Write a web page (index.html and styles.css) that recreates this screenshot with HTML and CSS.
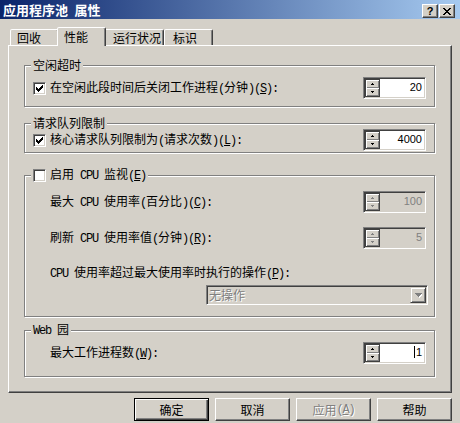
FILE: index.html
```html
<!DOCTYPE html>
<html lang="zh-CN">
<head>
<meta charset="utf-8">
<title>应用程序池 属性</title>
<link rel="stylesheet" href="styles.css">
</head>
<body>
<div class="win">
  <div class="titlebar">
    <span class="title">应用程序池&ensp;属性</span>
    <div class="tbtns">
      <span class="tbtn">?</span>
      <span class="tbtn"><svg width="8" height="7" viewBox="0 0 8 7" shape-rendering="crispEdges"><path d="M0 0h2v1H0zM6 0h2v1H6zM1 1h2v1H1zM5 1h2v1H5zM2 2h4v1H2zM3 3h2v1H3zM2 4h4v1H2zM1 5h2v1H1zM5 5h2v1H5zM0 6h2v1H0zM6 6h2v1H6z"/></svg></span>
    </div>
  </div>
  <div class="client">
    <div class="tabs">
      <div class="tab t1">回收</div>
      <div class="tab sel t2">性能</div>
      <div class="tab t3">运行状况</div>
      <div class="tab t4">标识</div>
    </div>
    <div class="panel">
      <div class="group g1">
        <div class="legend">空闲超时</div>
        <div class="row m11">
          <div class="lbl"><span class="cb"><svg width="7" height="7" viewBox="0 0 7 7" shape-rendering="crispEdges"><path d="M6 0h1v1H6zM5 1h2v1H5zM0 2h1v1H0zM4 2h3v1H4zM0 3h2v1H0zM3 3h3v1H3zM0 4h5v1H0zM1 5h3v1H1zM2 6h1v1H2z"/></svg></span><span>在空闲此段时间后关闭工作进程<span class="en">(</span>分钟<span class="en">)(<u>S</u>):</span></span></div>
          <div class="spin">
            <div class="sbtns">
              <span class="sb"><svg width="3" height="2" viewBox="0 0 3 2" shape-rendering="crispEdges"><path d="M1 0h1v1h1v1H0V1h1z"/></svg></span>
              <span class="sb"><svg width="3" height="2" viewBox="0 0 3 2" shape-rendering="crispEdges"><path d="M0 0h3v1H2v1H1V1H0z"/></svg></span>
            </div>
            <span class="val">20</span>
          </div>
        </div>
      </div>

      <div class="group g2">
        <div class="legend">请求队列限制</div>
        <div class="row m5">
          <div class="lbl"><span class="cb"><svg width="7" height="7" viewBox="0 0 7 7" shape-rendering="crispEdges"><path d="M6 0h1v1H6zM5 1h2v1H5zM0 2h1v1H0zM4 2h3v1H4zM0 3h2v1H0zM3 3h3v1H3zM0 4h5v1H0zM1 5h3v1H1zM2 6h1v1H2z"/></svg></span><span>核心请求队列限制为<span class="en">(</span>请求次数<span class="en">)(<u>L</u>):</span></span></div>
          <div class="spin">
            <div class="sbtns">
              <span class="sb"><svg width="3" height="2" viewBox="0 0 3 2" shape-rendering="crispEdges"><path d="M1 0h1v1h1v1H0V1h1z"/></svg></span>
              <span class="sb"><svg width="3" height="2" viewBox="0 0 3 2" shape-rendering="crispEdges"><path d="M0 0h3v1H2v1H1V1H0z"/></svg></span>
            </div>
            <span class="val">4000</span>
          </div>
        </div>
      </div>

      <div class="group g3">
        <div class="legend"><span class="cb"></span><span>启用<span class="en"> CPU </span>监视<span class="en">(<u>E</u>)</span></span></div>
        <div class="row m15">
          <span class="plain">最大<span class="en"> CPU </span>使用率<span class="en">(</span>百分比<span class="en">)(<u>C</u>):</span></span>
          <div class="spin dis">
            <div class="sbtns">
              <span class="sb"><svg width="3" height="2" viewBox="0 0 3 2" shape-rendering="crispEdges"><path d="M1 0h1v1h1v1H0V1h1z"/></svg></span>
              <span class="sb"><svg width="3" height="2" viewBox="0 0 3 2" shape-rendering="crispEdges"><path d="M0 0h3v1H2v1H1V1H0z"/></svg></span>
            </div>
            <span class="val">100</span>
          </div>
        </div>
        <div class="row m14">
          <span class="plain">刷新<span class="en"> CPU </span>使用率值<span class="en">(</span>分钟<span class="en">)(<u>R</u>):</span></span>
          <div class="spin dis">
            <div class="sbtns">
              <span class="sb"><svg width="3" height="2" viewBox="0 0 3 2" shape-rendering="crispEdges"><path d="M1 0h1v1h1v1H0V1h1z"/></svg></span>
              <span class="sb"><svg width="3" height="2" viewBox="0 0 3 2" shape-rendering="crispEdges"><path d="M0 0h3v1H2v1H1V1H0z"/></svg></span>
            </div>
            <span class="val">5</span>
          </div>
        </div>
        <div class="row textrow m17">
          <span class="plain"><span class="en">CPU </span>使用率超过最大使用率时执行的操作<span class="en">(<u>P</u>):</span></span>
        </div>
        <div class="row comborow m5">
          <div class="combo">
            <span class="ctext">无操作</span>
            <span class="dd"><svg width="7" height="5" viewBox="0 0 7 5" shape-rendering="crispEdges"><path fill="#fff" d="M1 1h7v1h-1v1h-1v1h-1v1h-1v-1h-1v-1h-1v-1h-1z"/><path fill="#808080" d="M0 0h7v1h-1v1h-1v1h-1v1h-1v-1h-1v-1h-1v-1h-1z"/></svg></span>
          </div>
        </div>
      </div>

      <div class="group g4">
        <div class="legend"><span><span class="en">Web </span>园</span></div>
        <div class="row m11">
          <span class="plain">最大工作进程数<span class="en">(<u>W</u>):</span></span>
          <div class="spin">
            <div class="sbtns">
              <span class="sb"><svg width="3" height="2" viewBox="0 0 3 2" shape-rendering="crispEdges"><path d="M1 0h1v1h1v1H0V1h1z"/></svg></span>
              <span class="sb"><svg width="3" height="2" viewBox="0 0 3 2" shape-rendering="crispEdges"><path d="M0 0h3v1H2v1H1V1H0z"/></svg></span>
            </div>
            <span class="val"><span class="caret"></span>1</span>
          </div>
        </div>
      </div>
    </div>
    <div class="buttons">
      <span class="btn def">确定</span>
      <span class="btn">取消</span>
      <span class="btn dis">应用<span class="en">(<u>A</u>)</span></span>
      <span class="btn">帮助</span>
    </div>
  </div>
</div>
</body>
</html>
```
FILE: styles.css
```css
* { box-sizing: border-box; }
html, body { margin: 0; padding: 0; }
body {
  width: 460px;
  height: 423px;
  overflow: hidden;
  background: #d4d0c8;
  font-family: "Noto Sans CJK SC", sans-serif;
  font-size: 12px;
  line-height: 14px;
  color: #000;
}
.win { width: 460px; height: 423px; display: flex; flex-direction: column; }

.titlebar {
  flex: none;
  height: 19px;
  background: linear-gradient(to right, #0a246a, #a6caf0);
  display: flex;
  justify-content: space-between;
  align-items: flex-start;
  padding: 0 5px 0 3px;
}
.title { color: #fff; font-weight: bold; font-size: 13px; line-height: 19px; }
.tbtns { display: flex; gap: 1px; padding-top: 4px; }
.tbtn {
  width: 16px; height: 14px;
  background: #d4d0c8;
  border: 1px solid;
  border-color: #fff #404040 #404040 #fff;
  box-shadow: inset -1px -1px #808080;
  display: flex; align-items: center; justify-content: center;
  font: bold 11px/12px "Liberation Sans", sans-serif;
  color: #000;
}

.client { flex: 1; padding: 8px 8px 0; display: flex; flex-direction: column; }

.tabs { flex: none; display: flex; align-items: flex-start; padding-left: 2px; height: 18px; }
.tab {
  height: 16px;
  margin-top: 2px;
  border: 1px solid;
  border-bottom: 0;
  border-color: #fff #404040 transparent #fff;
  box-shadow: inset -1px 0 #808080;
  border-radius: 2px 2px 0 0;
  padding: 1px 0 0 6px;
  background: #d4d0c8;
}
.tab.sel {
  position: relative;
  z-index: 1;
  height: 19px;
  margin: 0 -2px -1px;
  padding-top: 2px;
}
.t1 { width: 49px; }
.t2 { width: 49px; }
.t3 { width: 60px; padding-left: 8px; }
.t4 { width: 49px; padding-left: 8px; }

.panel {
  flex: none;
  width: 444px;
  height: 348px;
  border: 1px solid;
  border-color: #fff #404040 #404040 #fff;
  box-shadow: inset -1px -1px #808080;
  padding: 19px 0 0 15px;
}

.group {
  width: 411px;
  border: 1px solid #808080;
  box-shadow: inset 1px 1px #fff, 1px 1px #fff;
}
.g2 { margin-top: 16px; padding-bottom: 1px; }
.g1 { padding-bottom: 7px; }
.g3 { margin-top: 22px; padding-bottom: 11px; }
.g4 { margin-top: 13px; padding-bottom: 12px; }

.legend {
  width: max-content;
  height: 14px;
  margin: -8px 0 -6px 6px;
  padding: 0 2px;
  background: #d4d0c8;
  display: flex;
  align-items: center;
  gap: 4px;
}

.row {
  display: flex;
  align-items: center;
  justify-content: space-between;
  padding: 0 8px;
  height: 22px;
}
.row.textrow { height: 14px; }
.row.comborow { height: 20px; justify-content: flex-end; }
.m5 { margin-top: 5px; }
.m11 { margin-top: 11px; }
.m14 { margin-top: 14px; }
.m15 { margin-top: 15px; }
.m17 { margin-top: 17px; }

.lbl { display: flex; align-items: center; gap: 4px; }
.plain { margin-left: 17px; white-space: nowrap; }

.en { font-family: "Liberation Mono", monospace; letter-spacing: -1.2px; }
u { text-decoration: underline; text-underline-offset: 1px; }

.cb {
  flex: none;
  width: 13px; height: 13px;
  background: #fff;
  border: 1px solid;
  border-color: #808080 #fff #fff #808080;
  box-shadow: inset 1px 1px #404040, inset -1px -1px #d4d0c8;
  display: flex; align-items: center; justify-content: center;
}
.cb svg { display: block; }

.spin {
  flex: none;
  width: 63px; height: 22px;
  display: flex;
  background: #fff;
  border: 1px solid;
  border-color: #808080 #fff #fff #808080;
  box-shadow: inset 1px 1px #404040, inset -1px -1px #d4d0c8;
  padding: 1px;
}
.spin.dis { background: #d4d0c8; }
.sbtns {
  flex: none;
  width: 15px; height: 18px;
  display: flex; flex-direction: column;
  border: 1px solid #404040;
}
.sb {
  flex: 1;
  display: flex; align-items: center; justify-content: center;
  background: #d4d0c8;
  box-shadow: inset 1px 1px #fff, inset -1px -1px #808080;
}
.sb svg { display: block; fill: #000; }
.spin.dis .sb svg { fill: #808080; }
.val {
  flex: 1;
  text-align: right;
  padding: 1px 2px 0 0;
  font: 11px/14px "Liberation Sans", sans-serif;
  color: #000;
}
.spin.dis .val { color: #808080; }
.caret {
  display: inline-block;
  width: 1px; height: 12px;
  background: #000;
  vertical-align: -2px;
  margin-right: 1px;
}

.combo {
  width: 222px; height: 20px;
  margin-right: -2px;
  display: flex; align-items: center;
  background: #d4d0c8;
  border: 1px solid;
  border-color: #808080 #fff #fff #808080;
  box-shadow: inset 1px 1px #404040, inset -1px -1px #d4d0c8;
  padding: 1px;
}
.ctext { flex: 1; padding-left: 1px; color: #808080; text-shadow: 1px 1px #fff; }
.dd {
  flex: none;
  width: 16px; height: 16px;
  border: 1px solid;
  border-color: #d4d0c8 #404040 #404040 #d4d0c8;
  box-shadow: inset 1px 1px #fff, inset -1px -1px #808080;
  display: flex; align-items: center; justify-content: center;
}
.dd svg { display: block; margin-left: 1px; }

.buttons {
  flex: none;
  display: flex;
  justify-content: flex-end;
  gap: 6px;
  margin-top: 5px;
}
.btn {
  width: 75px; height: 23px;
  display: flex; align-items: center; justify-content: center;
  border: 1px solid;
  border-color: #fff #404040 #404040 #fff;
  box-shadow: inset -1px -1px #808080;
}
.btn.def {
  border-color: #000;
  box-shadow: inset 1px 1px #fff, inset -1px -1px #404040, inset -2px -2px #808080;
}
.btn.dis { color: #808080; text-shadow: 1px 1px #fff; }
```
